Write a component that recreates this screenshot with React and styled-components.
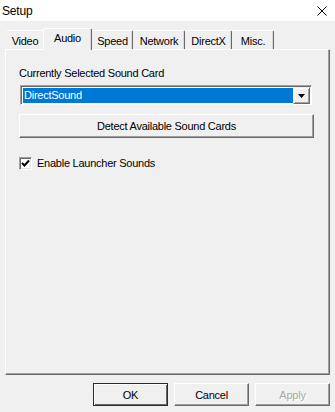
import React from "react";
import styled, { createGlobalStyle } from "styled-components";

const Global = createGlobalStyle`
  html, body { margin: 0; padding: 0; background: #f0f0f0; }
  body { font-family: "Liberation Sans", Arial, sans-serif; font-size: 11px; letter-spacing: -0.25px; color: #000; }
  * { box-sizing: border-box; }
`;

const Window = styled.div`
  width: 335px;
  height: 412px;
  display: flex;
  flex-direction: column;
  background: #f0f0f0;
  overflow: hidden;
`;

const TitleBar = styled.div`
  height: 21px;
  flex: none;
  background: #fff;
  display: flex;
  align-items: center;
  justify-content: space-between;
  padding: 0 8px 0 2px;
`;

const Title = styled.span`
  font-size: 12px;
  line-height: 14px;
  letter-spacing: -0.2px;
  color: #000;
`;

const Body = styled.div`
  flex: 1;
  display: flex;
  flex-direction: column;
  padding: 7px 5px 0 5px;
`;

const TabStrip = styled.div`
  height: 21px;
  flex: none;
  display: flex;
  align-items: flex-end;
  padding-left: 1px;
  position: relative;
  z-index: 1;
`;

const Tab = styled.div`
  width: ${(p) => p.$w}px;
  height: ${(p) => (p.$active ? 22 : 19)}px;
  margin-bottom: ${(p) => (p.$active ? -1 : 0)}px;
  margin-left: ${(p) => (p.$active ? -1 : 0)}px;
  display: flex;
  justify-content: center;
  align-items: flex-start;
  padding-top: ${(p) => (p.$active ? 3 : 4)}px;
  line-height: 13px;
  background: #f0f0f0;
  border-top: 1px solid #fff;
  border-left: 1px solid ${(p) => (p.$active ? "#fff" : "#f0f0f0")};
  border-right: 1px solid ${(p) => (p.$hideRight ? "#f0f0f0" : "#696969")};
  box-shadow: ${(p) => (p.$hideRight ? "none" : "inset -1px 0 0 #d8d8d8")};
  border-radius: 2px 2px 0 0;
`;

const Panel = styled.div`
  height: 326px;
  flex: none;
  border-top: 1px solid #fff;
  border-left: 1px solid #fff;
  border-right: 1px solid #696969;
  border-bottom: 1px solid #696969;
  box-shadow: inset -1px -1px 0 #a0a0a0;
  padding: 17px 0 0 13px;
  display: flex;
  flex-direction: column;
  align-items: flex-start;
`;

const Label = styled.div`
  line-height: 13px;
  height: 13px;
`;

const Combo = styled.div`
  margin-top: 5px;
  margin-left: 1px;
  width: 292px;
  height: 20px;
  display: flex;
  border: 1px solid;
  border-color: #a0a0a0 #fff #fff #a0a0a0;
  box-shadow: inset 1px 1px 0 #696969;
  background: #fff;
  padding: 2px 1px 1px 2px;
`;

const Selection = styled.div`
  flex: 1;
  background: #0078d7;
  color: #fff;
  line-height: 15px;
  padding-left: 1px;
`;

const DropButton = styled.div`
  width: 17px;
  margin-top: -1px;
  margin-bottom: -1px;
  flex: none;
  background: #f0f0f0;
  border: 1px solid;
  border-color: #f0f0f0 #696969 #696969 #f0f0f0;
  box-shadow: inset 1px 1px 0 #fff, inset -1px -1px 0 #a0a0a0;
  display: flex;
  align-items: center;
  justify-content: center;
`;

const WideButton = styled.div`
  margin-top: 9px;
  width: 295px;
  height: 24px;
  display: flex;
  align-items: center;
  justify-content: center;
  background: #f0f0f0;
  border: 1px solid;
  border-color: #fff #696969 #696969 #fff;
  box-shadow: inset -1px -1px 0 #a0a0a0;
`;

const CheckRow = styled.label`
  margin-top: 19px;
  display: flex;
  align-items: center;
  gap: 5px;
  line-height: 13px;
`;

const CheckBox = styled.span`
  width: 13px;
  height: 13px;
  background: #fff;
  border: 1px solid;
  border-color: #a0a0a0 #fff #fff #a0a0a0;
  box-shadow: inset 1px 1px 0 #696969, inset -1px -1px 0 #e3e3e3;
  display: flex;
  align-items: center;
  justify-content: center;
`;

const Footer = styled.div`
  margin-top: 8px;
  display: flex;
  justify-content: flex-end;
  gap: 6px;
`;

const DialogButton = styled.div`
  width: 75px;
  height: 23px;
  display: flex;
  align-items: center;
  justify-content: center;
  background: #f0f0f0;
  color: ${(p) => (p.$disabled ? "#a8a8a8" : "#000")};
  text-shadow: ${(p) => (p.$disabled ? "1px 1px 0 #fff" : "none")};
  border: 1px solid;
  border-color: ${(p) =>
    p.$default ? "#2a2a2a" : "#fff #696969 #696969 #fff"};
  box-shadow: ${(p) =>
    p.$default
      ? "inset 1px 1px 0 #fff, inset -1px -1px 0 #696969"
      : "inset -1px -1px 0 #a0a0a0"};
`;

const tabs = [
  { name: "Video", w: 38, hideRight: true },
  { name: "Audio", w: 49, active: true },
  { name: "Speed", w: 41 },
  { name: "Network", w: 52 },
  { name: "DirectX", w: 47 },
  { name: "Misc.", w: 42 },
];

export default function App() {
  return (
    <>
      <Global />
      <Window>
        <TitleBar>
          <Title>Setup</Title>
          <svg width="10" height="10" viewBox="0 0 10 10">
            <path d="M0.5 0.5 L9.5 9.5 M9.5 0.5 L0.5 9.5" stroke="#000" strokeWidth="1" fill="none" />
          </svg>
        </TitleBar>
        <Body>
          <TabStrip>
            {tabs.map((t) => (
              <Tab key={t.name} $w={t.w} $active={t.active} $hideRight={t.hideRight}>
                {t.name}
              </Tab>
            ))}
          </TabStrip>
          <Panel>
            <Label>Currently Selected Sound Card</Label>
            <Combo>
              <Selection>DirectSound</Selection>
              <DropButton>
                <svg width="7" height="4" viewBox="0 0 7 4">
                  <path d="M0 0 H7 L3.5 4 Z" fill="#000" />
                </svg>
              </DropButton>
            </Combo>
            <WideButton>Detect Available Sound Cards</WideButton>
            <CheckRow>
              <CheckBox>
                <svg width="9" height="9" viewBox="0 0 9 9">
                  <path d="M1 4 L3.5 6.5 L8 1.5" stroke="#000" strokeWidth="2" fill="none" />
                </svg>
              </CheckBox>
              Enable Launcher Sounds
            </CheckRow>
          </Panel>
          <Footer>
            <DialogButton $default>OK</DialogButton>
            <DialogButton>Cancel</DialogButton>
            <DialogButton $disabled>Apply</DialogButton>
          </Footer>
        </Body>
      </Window>
    </>
  );
}
